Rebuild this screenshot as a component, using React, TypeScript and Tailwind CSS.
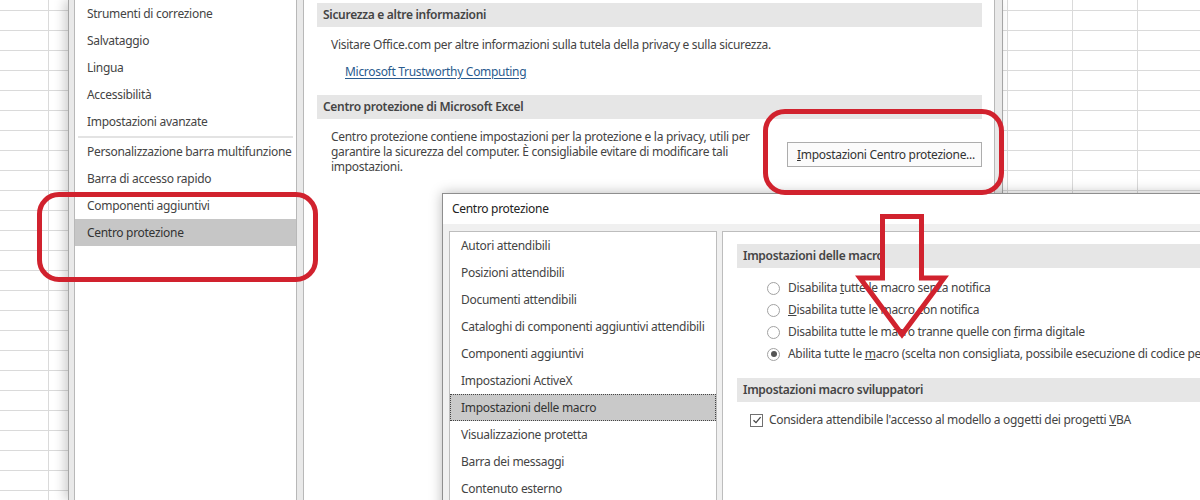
import React from "react";

const gridRows = Array.from({ length: 26 }, (_, i) => i);

const navTop = [
  "Strumenti di correzione",
  "Salvataggio",
  "Lingua",
  "Accessibilità",
  "Impostazioni avanzate",
];
const navBottom = [
  "Personalizzazione barra multifunzione",
  "Barra di accesso rapido",
  "Componenti aggiuntivi",
  "Centro protezione",
];

const trustItems = [
  "Autori attendibili",
  "Posizioni attendibili",
  "Documenti attendibili",
  "Cataloghi di componenti aggiuntivi attendibili",
  "Componenti aggiuntivi",
  "Impostazioni ActiveX",
  "Impostazioni delle macro",
  "Visualizzazione protetta",
  "Barra dei messaggi",
  "Contenuto esterno",
];

// background sheet behind the dialogs
function ExcelGrid() {
  return (
    <div className="flex flex-col">
      {gridRows.map((i) => (
        <div
          key={i}
          className={`flex border-b border-[#dadada] ${i === 0 ? "h-[11px]" : "h-[20px]"}`}
        >
          <div className="w-[49px] border-r border-[#dadada]" />
          <div className="w-[959px] border-r border-[#dadada]" />
          <div className="w-[65px] border-r border-[#dadada]" />
          <div className="w-[65px] border-r border-[#dadada]" />
          <div className="flex-1" />
        </div>
      ))}
    </div>
  );
}

function NavItem({ label, active }: { label: string; active?: boolean }) {
  return (
    <div
      className={`h-[27px] flex items-center pl-[12px] whitespace-nowrap ${
        active ? "bg-[#c6c6c6] text-[#333]" : ""
      }`}
    >
      {label}
    </div>
  );
}

function SectionHeader({ children }: { children: React.ReactNode }) {
  return (
    <div className="h-[24px] bg-[#e6e6e6] flex items-center px-[6px] font-semibold text-[#444] whitespace-nowrap">
      {children}
    </div>
  );
}

function OptionsDialog() {
  return (
    <div className="absolute left-[68px] top-0 h-[500px] w-[935px] flex border-x border-[#a5a5a5] bg-[#e9e9e9] shadow-[-4px_0_10px_rgba(0,0,0,0.18)]">
      <div className="w-[5px] shrink-0" />
      <div className="w-[223px] shrink-0 bg-white border-x border-[#b8b8b8] flex flex-col">
        {navTop.map((n) => (
          <NavItem key={n} label={n} />
        ))}
        <div className="h-[3px] flex items-center px-[3px]">
          <div className="h-[2px] w-full bg-[#e3e3e3]" />
        </div>
        {navBottom.map((n) => (
          <NavItem key={n} label={n} active={n === "Centro protezione"} />
        ))}
      </div>
      <div className="w-[6px] shrink-0" />
      <div className="w-[692px] shrink-0 bg-white border-x border-[#b8b8b8] pl-[13px] pr-[12px] pt-[3px] flex flex-col">
        <SectionHeader>Sicurezza e altre informazioni</SectionHeader>
        <div className="mt-[10px] pl-[14px] leading-[15px] whitespace-nowrap">
          Visitare Office.com per altre informazioni sulla tutela della privacy e sulla sicurezza.
        </div>
        <div className="mt-[12px] pl-[28px] leading-[15px]">
          <span className="text-[#2a5b8e] underline underline-offset-2">
            Microsoft Trustworthy Computing
          </span>
        </div>
        <div className="mt-[16px]">
          <SectionHeader>Centro protezione di Microsoft Excel</SectionHeader>
        </div>
        <div className="mt-[10px] flex justify-between items-start">
          <p className="pl-[14px] leading-[15px] whitespace-nowrap">
            Centro protezione contiene impostazioni per la protezione e la privacy, utili per
            <br />
            garantire la sicurezza del computer. È consigliabile evitare di modificare tali
            <br />
            impostazioni.
          </p>
          <button className="mt-[13px] h-[25px] w-[195px] border border-[#adadad] bg-[#fbfbfb] text-[#333] text-left pl-[9px] whitespace-nowrap">
            <span className="underline">I</span>mpostazioni Centro protezione...
          </button>
        </div>
      </div>
      <div className="w-[6px] shrink-0" />
    </div>
  );
}

function Radio({ checked }: { checked?: boolean }) {
  return (
    <span className="w-[13px] h-[13px] shrink-0 rounded-full border border-[#a2a2a2] bg-white flex items-center justify-center">
      {checked && <span className="w-[6px] h-[6px] rounded-full bg-[#555]" />}
    </span>
  );
}

function RadioRow({ checked, children }: { checked?: boolean; children: React.ReactNode }) {
  return (
    <div className="h-[22px] flex items-center gap-[8px] pl-[30px] whitespace-nowrap">
      <Radio checked={checked} />
      <span>{children}</span>
    </div>
  );
}

function TrustCenterDialog() {
  return (
    <div className="absolute left-[442px] top-[193px] w-[780px] h-[330px] border border-[#8e8e8e] bg-[#f0f0f0] shadow-[0_0_12px_rgba(0,0,0,0.28)] flex flex-col">
      <div className="h-[30px] bg-white flex items-center pl-[9px] text-[#222]">Centro protezione</div>
      <div className="flex-1 flex gap-[5px] pt-[7px] pl-[6px]">
        <div className="w-[268px] shrink-0 bg-white border border-[#bdbdbd] flex flex-col">
          {trustItems.map((t) => {
            const active = t === "Impostazioni delle macro";
            return (
              <div
                key={t}
                className={`h-[27px] flex items-center pl-[10px] whitespace-nowrap border ${
                  active
                    ? "bg-[#c9c9c9] border-dotted border-[#444] text-[#333]"
                    : "border-transparent"
                }`}
              >
                {t}
              </div>
            );
          })}
        </div>
        <div className="flex-1 min-w-0 overflow-hidden bg-white border border-[#bdbdbd] pl-[14px] pt-[12px] flex flex-col">
          <SectionHeader>Impostazioni delle macro</SectionHeader>
          <div className="mt-[9px] flex flex-col">
            <RadioRow>
              Disabilita <span className="underline">t</span>utte le macro senza notifica
            </RadioRow>
            <RadioRow>
              <span className="underline">D</span>isabilita tutte le macro con notifica
            </RadioRow>
            <RadioRow>
              Disabilita tutte le macro tranne quelle con <span className="underline">f</span>irma digitale
            </RadioRow>
            <RadioRow checked>
              Abilita tutte le <span className="underline">m</span>acro (scelta non consigliata, possibile
              esecuzione di codice pericoloso)
            </RadioRow>
          </div>
          <div className="mt-[13px]">
            <SectionHeader>Impostazioni macro sviluppatori</SectionHeader>
          </div>
          <div className="mt-[8px] h-[20px] flex items-center gap-[6px] pl-[13px] whitespace-nowrap">
            <span className="w-[13px] h-[13px] border border-[#707070] bg-white flex items-center justify-center">
              <svg width="10" height="10" viewBox="0 0 10 10">
                <path d="M1.5 5.2 L4 7.6 L8.6 2.2" fill="none" stroke="#444" strokeWidth="1.3" />
              </svg>
            </span>
            <span>
              Considera attendibile l'accesso al modello a oggetti dei progetti <span className="underline">V</span>BA
            </span>
          </div>
        </div>
      </div>
    </div>
  );
}

function Highlights() {
  return (
    <>
      <div className="absolute left-[37px] top-[192px] w-[281px] h-[90px] border-[5px] border-[#d1222e] rounded-[22px]" />
      <div className="absolute left-[763px] top-[109px] w-[241px] h-[86px] border-[5px] border-[#d1222e] rounded-[22px]" />
      <svg className="absolute left-[850px] top-[208px]" width="105" height="136" viewBox="850 208 105 136">
        <polygon
          points="882.5,216.5 921.5,216.5 921.5,278 944,278 902,334.5 860,278 882.5,278"
          fill="none"
          stroke="#d1222e"
          strokeWidth="5"
          strokeLinejoin="miter"
        />
      </svg>
    </>
  );
}

export default function App() {
  return (
    <div className="relative w-[1200px] h-[500px] overflow-hidden bg-white font-['Noto_Sans',sans-serif] text-[12px] tracking-[-0.3px] text-[#444]">
      <ExcelGrid />
      <OptionsDialog />
      <TrustCenterDialog />
      <Highlights />
    </div>
  );
}
